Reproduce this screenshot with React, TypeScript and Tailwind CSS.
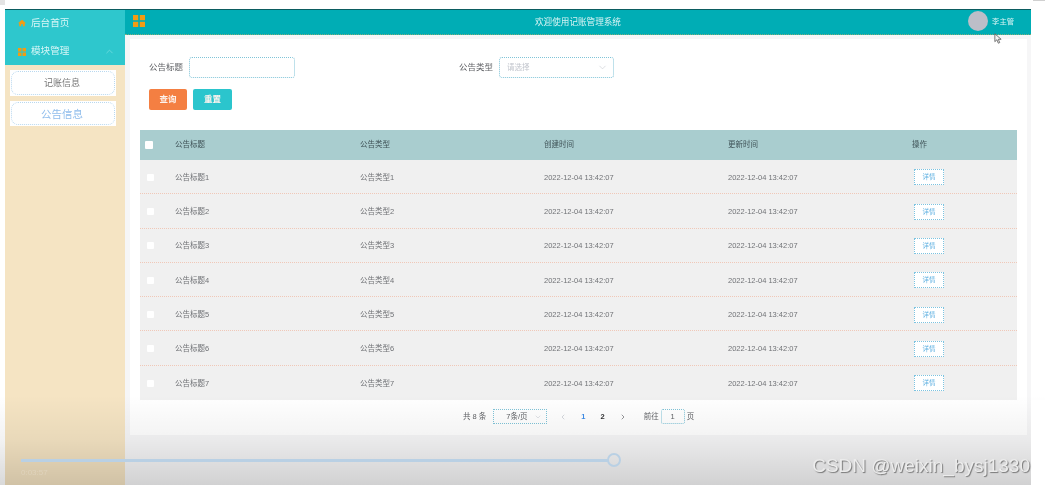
import { ChevronDown, ChevronLeft, ChevronRight, ChevronUp } from "lucide-react"

const rows = [1, 2, 3, 4, 5, 6, 7]
const rowGrid = "grid grid-cols-[35px_185px_184px_184px_184px_105px] items-center"

function GridIcon({ className }: { className: string }) {
    return (
        <svg viewBox="0 0 12 12" className={className} fill="#f39c12">
            <rect x="0" y="0" width="5.2" height="5.2" />
            <rect x="6.8" y="0" width="5.2" height="5.2" />
            <rect x="0" y="6.8" width="5.2" height="5.2" />
            <rect x="6.8" y="6.8" width="5.2" height="5.2" />
        </svg>
    )
}

function Sidebar() {
    return (
        <aside className="w-[120px] shrink-0 bg-[#f5e4c3]">
            <div className="h-[55px] bg-[#2ec7cd] text-[9.6px] text-[#d8f6f6]">
                <div className="flex h-[25px] items-center pl-[13px] pt-[1px]">
                    <svg viewBox="0 0 12 12" className="mr-[5px] h-[8px] w-[8px]" fill="#f39c12">
                        <path d="M6 1 12 6.5H10.2V11H7.4V7.8H4.6V11H1.8V6.5H0Z" />
                    </svg>
                    后台首页
                </div>
                <div className="flex h-[30px] items-center pl-[13px] pt-[3px]">
                    <GridIcon className="mr-[5px] h-[8px] w-[8px]" />
                    模块管理
                    <ChevronUp className="ml-[35px] h-[11px] w-[11px] text-[#7fdfe2]" strokeWidth={1.5} />
                </div>
            </div>
            <div className="flex flex-col gap-[5px] pl-[5px] pr-[9px] pt-[5px]">
                <div className="bg-white p-[1px]">
                    <div className="flex h-[24px] items-center justify-center rounded-[7px] border border-dotted border-[#b9d8ef] pt-[1px] pr-[2px] text-[9px] text-[#777777]">
                        记账信息
                    </div>
                </div>
                <div className="bg-white p-[1px]">
                    <div className="flex h-[23px] items-center justify-center rounded-[7px] border border-dotted border-[#b9d8ef] pt-[2px] pr-[2px] text-[10.5px] text-[#8fbdec]">
                        公告信息
                    </div>
                </div>
            </div>
        </aside>
    )
}

function Header() {
    return (
        <header className="relative flex h-[25px] shrink-0 items-center justify-center border-b border-dotted border-[#7fae7c] bg-[#00adb5] text-[8.6px] text-[#d8f4f4]">
            <GridIcon className="absolute left-[8px] top-[5px] h-[12px] w-[12px]" />
            欢迎使用记账管理系统
            <div className="absolute right-[17px] top-[1px] flex items-center gap-[4px]">
                <div className="h-[20px] w-[20px] rounded-full bg-[#bcbec8]" />
                <span className="pt-[2px] text-[7.3px]">李主管</span>
            </div>
        </header>
    )
}

function Filters() {
    return (
        <div className="pl-[19px] text-[8.5px] text-[#606266]">
            <div className="flex h-[21px] items-center">
                <span className="w-[40px]">公告标题</span>
                <div className="h-[21px] w-[106px] rounded-[3px] border border-dotted border-[#80c4d8] bg-white" />
                <span className="ml-[164px] w-[40px]">公告类型</span>
                <div className="flex h-[21px] w-[115px] items-center justify-between rounded-[3px] border border-dotted border-[#80c4d8] bg-white pl-[7px] pr-[5px] text-[7.5px] text-[#c0c4cc]">
                    请选择
                    <ChevronDown className="h-[11px] w-[11px]" strokeWidth={1.2} />
                </div>
            </div>
            <div className="mt-[11px] flex gap-[6px] text-[8.5px] font-bold text-[#fdf3ee]">
                <div className="flex h-[21px] w-[38px] items-center justify-center rounded-[2px] bg-[#f47f42]">查询</div>
                <div className="flex h-[21px] w-[39px] items-center justify-center rounded-[2px] bg-[#2bc5cd]">重置</div>
            </div>
        </div>
    )
}

function Table() {
    return (
        <div className="ml-[10px] mt-[20px] w-[877px] text-[7.5px] text-[#707276]">
            <div className={`${rowGrid} h-[30px] bg-[#a9cdcf] text-[#3f5257]`}>
                <div className="ml-[5px] h-[8px] w-[8px] rounded-[1px] bg-white" />
                <span>公告标题</span>
                <span>公告类型</span>
                <span>创建时间</span>
                <span>更新时间</span>
                <span>操作</span>
            </div>
            {rows.map((n) => (
                <div
                    key={n}
                    className={`${rowGrid} h-[34.3px] border-b border-dotted bg-[#f0f0f0] pt-[1.4px] ${n < 7 ? "border-[#f0c8b8]" : "border-transparent"}`}
                >
                    <div className="ml-[7px] h-[7px] w-[7px] rounded-[1px] bg-white" />
                    <span>公告标题{n}</span>
                    <span>公告类型{n}</span>
                    <span>2022-12-04 13:42:07</span>
                    <span>2022-12-04 13:42:07</span>
                    <div className="ml-[2px] flex h-[16px] w-[30px] items-center justify-center border border-dotted border-[#7cc3e0] bg-white text-[6.5px] text-[#5aaee0]">
                        详情
                    </div>
                </div>
            ))}
        </div>
    )
}

function Pagination() {
    return (
        <div className="mt-[8px] flex h-[17px] items-center pl-[333px] text-[7.5px] text-[#606266]">
            <span>共 8 条</span>
            <div className="ml-[7px] flex h-[15px] w-[54px] items-center justify-between border border-dotted border-[#80c4d8] pl-[12px] pr-[4px]">
                7条/页
                <ChevronDown className="h-[8px] w-[8px] text-[#c0c4cc]" strokeWidth={1.5} />
            </div>
            <ChevronLeft className="ml-[12px] h-[8px] w-[8px] text-[#c0c4cc]" strokeWidth={2} />
            <span className="ml-[14px] font-bold text-[#3f8ee8]">1</span>
            <span className="ml-[15px] font-bold text-[#303133]">2</span>
            <ChevronRight className="ml-[14px] h-[8px] w-[8px] text-[#606266]" strokeWidth={2} />
            <span className="ml-[17px]">前往</span>
            <div className="mx-[2px] flex h-[15px] w-[24px] items-center justify-center rounded-[2px] border border-dotted border-[#80c4d8]">1</div>
            <span>页</span>
        </div>
    )
}

export default function App() {
    return (
        <div className="relative h-[485px] w-[1045px] overflow-hidden bg-white font-['Liberation_Sans','Noto_Sans_CJK_SC',sans-serif] blur-[0.5px]">
            <div className="pl-[5px] pr-[14px] pt-[9px]">
                <div className="flex h-[476px] border-t border-[#0b5c60]">
                    <Sidebar />
                    <main className="flex min-w-0 flex-1 flex-col bg-[#f6f6f7]">
                        <Header />
                        <div className="ml-[5px] mr-[4px] mt-[4px] h-[396px] bg-white pt-[18px]">
                            <Filters />
                            <Table />
                            <Pagination />
                        </div>
                    </main>
                </div>
            </div>

            {/* player fade + seek bar over the page */}
            <div className="absolute inset-x-0 bottom-0 h-[90px] bg-gradient-to-b from-black/0 via-black/5 to-black/15" />
            <div className="absolute left-[1031px] right-0 top-[400px] bottom-0 bg-white" />
            <div className="absolute left-0 top-0 h-[5px] w-[5px] bg-[#e4e4e4]" />
            <div className="absolute left-[1033px] top-0 h-[1px] w-[12px] bg-[#d0d0d0]" />
            <div className="absolute left-[21px] top-[459px] h-[3px] w-[587px] bg-[#b9d0e4]" />
            <div className="absolute left-[607px] top-[453px] h-[14px] w-[14px] rounded-full border-2 border-[#b9d0e4]" />
            <span className="absolute left-[21px] top-[467px] text-[8px] text-white/20">0:03:57</span>
            <svg viewBox="0 0 10 14" className="absolute left-[994px] top-[33px] h-[11px] w-[8px]" fill="#f4f4f4" stroke="#555555" strokeWidth="1">
                <path d="M1 1v10l2.6-2.4L5.4 13l1.8-.8-1.8-4.2H9Z" />
            </svg>
            <span className="absolute right-[15px] top-[452px] text-[19px] text-[#ececec] [text-shadow:1px_1px_1px_#777777]">CSDN @weixin_bysj1330</span>
        </div>
    )
}
